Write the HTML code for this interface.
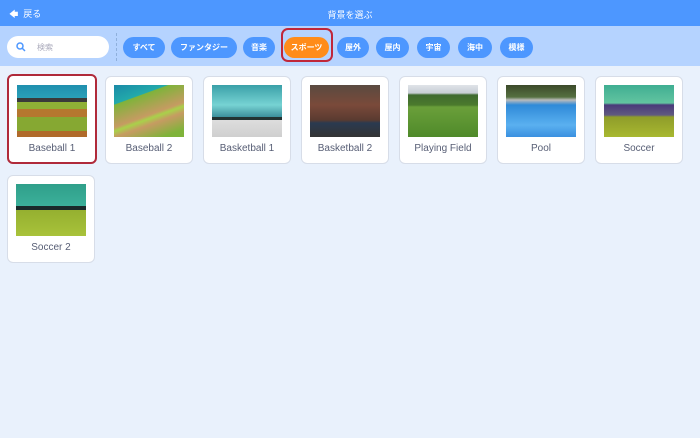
<!DOCTYPE html>
<html><head><meta charset="utf-8"><style>
*{margin:0;padding:0;box-sizing:border-box}
body{width:700px;height:438px;background:#e9f1fc;font-family:"Liberation Sans","Noto Sans CJK JP",sans-serif;position:relative;overflow:hidden}
.hdr{position:absolute;left:0;top:0;width:700px;height:26px;background:#4d97ff;color:#fff;font-size:9px}
.hdr .t{position:absolute;left:0;width:700px;top:8px;text-align:center}
.hdr .b{position:absolute;left:9px;top:7px}
.bar{position:absolute;top:26px;left:0;width:700px;height:40px;background:#b5d3ff}
.search{position:absolute;left:7px;top:36px;width:102px;height:22px;background:#fff;border-radius:11px;font-size:8px;color:#aab}
.pill{position:absolute;top:37px;height:21px;border-radius:11px;background:#4d97ff;color:#fff;font-size:8px;font-weight:bold;text-align:center;line-height:21px}
.sel{position:absolute;left:281px;top:28px;width:52px;height:34px;border:2px solid #c0273a;border-radius:7px}
.div{position:absolute;left:116px;top:33px;height:28px;border-left:1px dashed #8fb0dc}
.card{position:absolute;width:88px;height:88px;background:#fff;border:1px solid #d7dde8;border-radius:6px}
.card .im{position:absolute;left:8px;top:8px;width:70px;height:52px;overflow:hidden}
.card .l{position:absolute;left:0;top:66px;width:100%;text-align:center;font-size:10px;color:#575e75}
.red{border:2px solid #b02a3a}
</style></head><body>
<div class="hdr"><div class="b">🡄&nbsp; 戻る</div><div class="t">背景を選ぶ</div></div>
<div class="bar"></div>
<div class="search"><svg style="position:absolute;left:9px;top:6px" width="10" height="10"><circle cx="4" cy="4" r="3" fill="none" stroke="#4d97ff" stroke-width="1.5"/><line x1="6" y1="6" x2="9" y2="9" stroke="#4d97ff" stroke-width="1.5"/></svg><span style="position:absolute;left:30px;top:6px">検索</span></div>
<div class="div"></div>
<div class="pill" style="left:123px;width:42px">すべて</div>
<div class="pill" style="left:171px;width:66px">ファンタジー</div>
<div class="pill" style="left:243px;width:32px">音楽</div>
<div class="pill" style="left:284px;width:45px;background:#ff8c1a">スポーツ</div>
<div class="sel"></div>
<div class="pill" style="left:337px;width:32px">屋外</div>
<div class="pill" style="left:376px;width:33px">屋内</div>
<div class="pill" style="left:417px;width:33px">宇宙</div>
<div class="pill" style="left:458px;width:34px">海中</div>
<div class="pill" style="left:500px;width:33px">模様</div>

<div class="card red" style="left:7px;top:74px;width:90px;height:90px"><div class="im" style="left:8px;top:9px;background:linear-gradient(#1f8fae 0,#2aa0b8 13px,#3a3a3a 13px,#3a3a3a 17px,#8fb036 17px,#8fb036 24px,#b5772f 24px,#b5772f 32px,#86a832 32px,#86a832 46px,#b06a2a 46px)"></div><div class="l" style="top:67px">Baseball 1</div></div>
<div class="card" style="left:105px;top:76px"><div class="im" style="background:linear-gradient(160deg,#1a8aa8 0,#2aa 25%,#7fb33a 26%,#c69b62 55%,#a9d14a 60%,#c69b62 68%,#7fb33a 90%)"></div><div class="l">Baseball 2</div></div>
<div class="card" style="left:203px;top:76px"><div class="im" style="background:linear-gradient(#3aa0a8 0,#77d3d3 20px,#3c8f9c 32px,#233 32px,#233 35px,#ddd 35px,#cfcfcf 52px)"></div><div class="l">Basketball 1</div></div>
<div class="card" style="left:301px;top:76px"><div class="im" style="background:linear-gradient(#5a4a40 0,#7a4a3a 20px,#5a3b30 35px,#2a3a50 38px,#333 52px)"></div><div class="l">Basketball 2</div></div>
<div class="card" style="left:399px;top:76px"><div class="im" style="background:linear-gradient(#dfe3e8 0,#c8ced5 8px,#3f6a2f 10px,#4b7a2d 20px,#6a9f3a 22px,#4f8a2a 52px)"></div><div class="l">Playing Field</div></div>
<div class="card" style="left:497px;top:76px"><div class="im" style="background:linear-gradient(#3c4a2a 0,#557040 12px,#bbb 15px,#2f8ad8 20px,#5ab0f0 40px,#3a90e0 52px)"></div><div class="l">Pool</div></div>
<div class="card" style="left:595px;top:76px"><div class="im" style="background:linear-gradient(#3fae92 0,#62c4a0 18px,#4a3a7a 20px,#605a80 30px,#8f9d2a 32px,#a8b830 52px)"></div><div class="l">Soccer</div></div>
<div class="card" style="left:7px;top:175px"><div class="im" style="background:linear-gradient(#2f9f8a 0,#3cb09a 22px,#1a2a2a 22px,#1a2a2a 26px,#95b030 26px,#a8c23a 52px)"></div><div class="l">Soccer 2</div></div>
</body></html>
